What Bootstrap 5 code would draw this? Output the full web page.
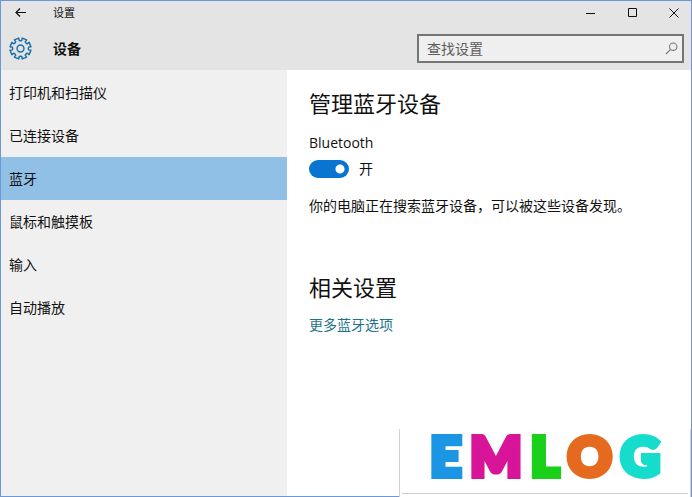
<!DOCTYPE html>
<html lang="zh-CN">
<head>
<meta charset="utf-8">
<meta name="viewport" content="width=device-width, initial-scale=1">
<title>设置</title>
<link href="https://cdn.jsdelivr.net/npm/bootstrap@5.3.0/dist/css/bootstrap.min.css" rel="stylesheet">
<style>
body { font: 14px/20px "Open Sans", "Noto Sans CJK SC", sans-serif; color: #111; }
.app-window { border: 1px solid #6c98d6; background: #fff; }
.app-head { background: #e4e4e4; padding-bottom: 7px; }
.title-bar { height: 23px; padding-left: 13px; }
.title-text { font-size: 11px; }
.icon-btn { border: 0; background: none; padding: 0; color: #111; display: flex; }
.window-controls { gap: 28px; padding-right: 11px; }
.head-row { padding: 10px 7px 0 8px; }
.back-gap { gap: 26px; }
.page-gap { gap: 21px; }
.page-title { font-size: 14px; line-height: 20px; }
.search-wrap { width: 267px; height: 29px; border: 2px solid #757575; background: #efefef; padding: 0 4px 0 8px; }
.search-wrap input { font-size: 14px; line-height: 20px; color: #333; padding: 0; min-width: 0; }
.search-wrap input::placeholder { color: #5c5c5c; opacity: 1; }
.side { width: 286px; background: #f0f0f0; padding-top: 1px; }
.side .nav-link { height: 43px; padding: 0 8px; color: #111; display: flex; align-items: center; border-radius: 0; }
.side .nav-link.active { background: #91c0e7; }
.pane { padding: 18px 22px; }
.section-title { font-size: 22px; line-height: 30px; font-weight: 400; margin: 0; }
.toggle-label { margin-top: 15px; }
.toggle-row { gap: 10px; margin-top: 6px; }
.toggle-row .form-check-input { width: 40px; height: 18px; margin: 0; float: none; border: 0; box-shadow: none;
  background: #0a75d0 radial-gradient(circle at 31px 9px, #fff 4px, transparent 5px); }
.status { margin: 17px 0 0; }
.related { margin-top: 56px; }
.more-link { display: inline-block; margin-top: 13px; color: #1b7488; text-decoration: none; }
.brand-panel { position: absolute; right: 0; bottom: -1px; width: 292px; height: 68px; background: #fff;
  border: solid #d0d0d8; border-width: 0 1px; padding: 0 2px 3px; }
.brand-mark { border-bottom: 1px solid #ccc; height: 65px; font: 900 54px/54px Lato, sans-serif; gap: 9px; }
.brand-mark span { -webkit-text-stroke: 6px currentColor; }
.c-blue { color: #1c96e4; } .c-pink { color: #d81498; } .c-green { color: #1ad01a; }
.c-orange { color: #e56a20; } .c-teal { color: #16dccc; }
</style>
<script src="https://cdn.jsdelivr.net/npm/bootstrap@5.3.0/dist/js/bootstrap.bundle.min.js"></script>
</head>
<body>
<div class="app-window position-relative d-flex flex-column min-vh-100">
  <header class="app-head">
    <div class="title-bar d-flex justify-content-between align-items-center">
      <div class="d-flex align-items-center back-gap">
        <button class="icon-btn" type="button" aria-label="返回">
          <svg width="13" height="11" viewBox="0 0 13 11" fill="none" stroke="currentColor" stroke-width="1.200"><path d="M12 5.500H2M6 1.500L2 5.500L6 9.500"/></svg>
        </button>
        <span class="title-text">设置</span>
      </div>
      <div class="window-controls d-flex align-items-center">
        <button class="icon-btn" type="button" aria-label="最小化"><svg width="14" height="12" viewBox="0 0 14 12"><path d="M2 6.500H11" stroke="currentColor"/></svg></button>
        <button class="icon-btn" type="button" aria-label="最大化"><svg width="14" height="12" viewBox="0 0 14 12"><path d="M2.500 1.500h8v8h-8z" fill="none" stroke="currentColor"/></svg></button>
        <button class="icon-btn" type="button" aria-label="关闭"><svg width="12" height="12" viewBox="0 0 12 12"><path d="M1.500 1.500l9 9M10.500 1.500l-9 9" fill="none" stroke="currentColor"/></svg></button>
      </div>
    </div>
    <div class="head-row d-flex justify-content-between align-items-center">
      <div class="d-flex align-items-center page-gap">
        <svg width="23" height="23" viewBox="-12 -12 24 24" fill="none" stroke="#1b6fa8" stroke-width="1.500" stroke-linejoin="round" aria-hidden="true">
          <path d="M-1.800-10.900L-1.400-8.400Q0-7.900 1.400-8.400L1.800-10.900L6.400-9L4.900-6.900Q5.600-5.600 6.900-4.900L9-6.400L10.900-1.800L8.400-1.400Q7.900 0 8.400 1.400L10.900 1.800L9 6.400L6.900 4.900Q5.600 5.600 4.900 6.900L6.400 9L1.800 10.900L1.400 8.400Q0 7.900-1.400 8.400L-1.800 10.900L-6.400 9L-4.900 6.900Q-5.600 5.600-6.900 4.900L-9 6.400L-10.900 1.800L-8.400 1.400Q-7.900 0-8.400-1.400L-10.900-1.800L-9-6.400L-6.900-4.900Q-5.600-5.600-4.900-6.900L-6.400-9Z"/><circle r="3.600"/>
        </svg>
        <h1 class="page-title fw-bold mb-0">设备</h1>
      </div>
      <form class="search-wrap d-flex align-items-center" role="search">
        <input class="flex-grow-1 border-0 bg-transparent w-100" type="text" placeholder="查找设置" aria-label="查找设置">
        <button class="icon-btn" type="button" aria-label="搜索">
          <svg width="13" height="13" viewBox="0 0 13 13" fill="none" stroke="#777" stroke-width="1.100"><circle cx="8.200" cy="4.700" r="3.700"/><path d="M5.600 7.400L1 12"/></svg>
        </button>
      </form>
    </div>
  </header>
  <div class="d-flex flex-grow-1">
    <nav class="side nav flex-column flex-nowrap flex-shrink-0" aria-label="设备">
      <a class="nav-link" href="#">打印机和扫描仪</a>
      <a class="nav-link" href="#">已连接设备</a>
      <a class="nav-link active" href="#" aria-current="page">蓝牙</a>
      <a class="nav-link" href="#">鼠标和触摸板</a>
      <a class="nav-link" href="#">输入</a>
      <a class="nav-link" href="#">自动播放</a>
    </nav>
    <main class="pane flex-grow-1">
      <h2 class="section-title">管理蓝牙设备</h2>
      <label class="toggle-label d-block" for="bluetooth">Bluetooth</label>
      <div class="toggle-row form-switch d-flex align-items-center p-0">
        <input class="form-check-input" type="checkbox" role="switch" id="bluetooth" checked>
        <span>开</span>
      </div>
      <p class="status">你的电脑正在搜索蓝牙设备，可以被这些设备发现。</p>
      <h2 class="section-title related">相关设置</h2>
      <a class="more-link" href="#">更多蓝牙选项</a>
    </main>
  </div>
  <div class="brand-panel">
    <div class="brand-mark d-flex justify-content-center"><span class="c-blue">E</span><span class="c-pink">M</span><span class="c-green">L</span><span class="c-orange">O</span><span class="c-teal">G</span></div>
  </div>
</div>
</body>
</html>
